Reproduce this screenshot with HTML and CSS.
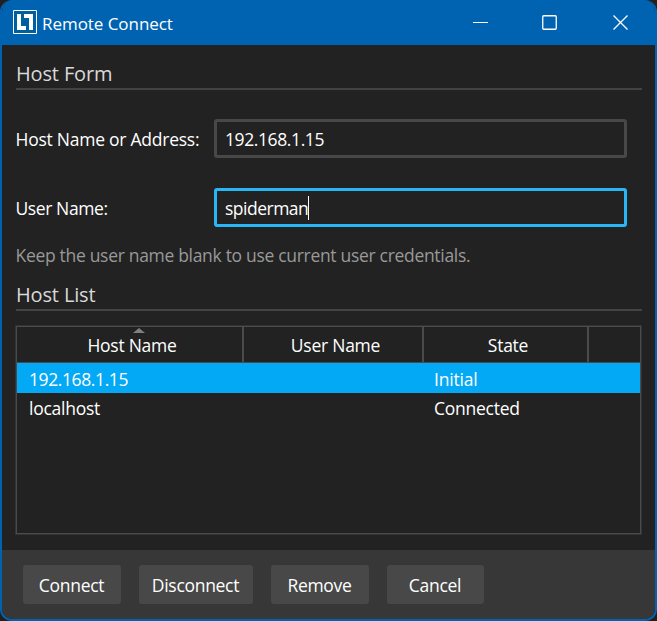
FILE: index.html
```html
<!DOCTYPE html>
<html lang="en">
<head>
<meta charset="utf-8">
<title>Remote Connect</title>
<link rel="stylesheet" href="styles.css">
</head>
<body>
<div class="window">
  <header class="titlebar">
    <svg class="logo" width="24" height="24" viewBox="0 0 24 24"><path fill="#005f9e" stroke="#fff" d="M.5.5h23v23H.5z"/><path fill="#fff" d="M4 4h4v12h5v4H4zM11 4h9v16h-4V8h-5z"/></svg>
    <h1 class="title">Remote Connect</h1>
    <div class="controls">
      <svg width="16" height="16" viewBox="0 0 16 16"><path stroke="#fff" d="M0 7.5h15"/></svg>
      <svg width="16" height="16" viewBox="0 0 16 16"><rect x=".75" y=".75" width="13.5" height="13.5" rx="1" fill="none" stroke="#fff" stroke-width="1.3"/></svg>
      <svg width="16" height="16" viewBox="0 0 16 16"><path stroke="#fff" stroke-width="1.3" d="M.5.5l14 14m0-14l-14 14"/></svg>
    </div>
  </header>
  <main class="content">
    <h2 class="heading">Host Form</h2>
    <div class="field"><label class="wide">Host Name or Address:</label><div class="input">192.168.1.15</div></div>
    <div class="field"><label>User Name:</label><div class="input focused">spiderman<i class="caret"></i></div></div>
    <p class="hint">Keep the user name blank to use current user credentials.</p>
    <h2 class="heading second">Host List</h2>
    <div class="table">
      <div class="row head">
        <div class="cell">Host Name<i class="sort"></i></div><div class="cell">User Name</div><div class="cell">State</div><div class="cell"></div>
      </div>
      <div class="row selected"><div>192.168.1.15</div><div></div><div>Initial</div></div>
      <div class="row"><div>localhost</div><div></div><div>Connected</div></div>
    </div>
  </main>
  <footer class="actions">
    <button class="b1">Connect</button>
    <button class="b2">Disconnect</button>
    <button class="b3">Remove</button>
    <button class="b4">Cancel</button>
  </footer>
</div>
</body>
</html>
```
FILE: styles.css
```css
* { box-sizing: border-box; }
body { margin: 0; background: #202020; font: 17.5px/24px "Open Sans", "Noto Sans", sans-serif; color: #fff; letter-spacing: -.4px; }
h1, h2, p { margin: 0; font-weight: 400; }
.window { width: 657px; height: 621px; display: flex; flex-direction: column; background: #222; border: 2px solid #0063b1; border-top: 0; border-radius: 12px; overflow: hidden; white-space: nowrap; }
.titlebar { height: 45px; display: flex; align-items: center; background: #0063b1; padding: 0 26px 0 11px; flex: none; }
.logo { margin-top: -1px; }
.title { font-size: 17px; line-height: 24px; letter-spacing: -.05px; margin: 2px 0 0 5px; }
.controls { display: flex; margin-left: auto; gap: 55px; }
.controls svg:first-child { margin-right: -2px; }
.content { height: 505px; padding: 15px 14px 0; flex: none; }
.heading { height: 30px; border-bottom: 2px solid #434343; font-size: 20px; line-height: 27px; letter-spacing: -.15px; color: #d9d9d9; margin-right: -1px; }
.field { display: flex; align-items: center; height: 39px; margin-top: 30px; }
.heading + .field { margin-top: 29px; }
.field label { width: 198px; letter-spacing: -.4px; margin-left: -.5px; margin-right: .5px; }
.field label.wide { letter-spacing: -.25px; }
.input { width: 413px; height: 39px; border: 3px solid #484848; border-radius: 3px; padding: 1px 0 0 8px; display: flex; align-items: center; }
.input.focused { border-color: #29b6f6; letter-spacing: -.5px; }
.caret { width: 1px; height: 24px; background: #fff; }
.hint { color: #999; margin: 16px 0 14px -.5px; letter-spacing: -.31px; }
.table { height: 210px; margin: 14px -1px 0 -1px; border: 1px solid #333; box-shadow: inset 0 0 0 1px #4b4b4b; padding: 1px; }
.row { display: grid; grid-template-columns: 227px 180px 165px 1fr; height: 29px; line-height: 30px; letter-spacing: -.25px; }
.row > div { padding-left: 12px; }
.row > div:nth-child(3) { padding-left: 10px; }
.head { height: 36px; line-height: 36px; border-bottom: 1px solid #4b4b4b; }
.head > .cell, .head > .cell:nth-child(3) { padding-left: 5px; border-right: 2px solid #4b4b4b; text-align: center; position: relative; }
.head > .cell:last-child { border: 0; }
.sort { position: absolute; top: 1px; left: 116px; border: solid transparent; border-width: 0 6px 5px; border-bottom-color: #808080; }
.selected { height: 30px; line-height: 32px; letter-spacing: -.4px; background: #03a9f4; }
.selected > div:nth-child(3) { letter-spacing: -.2px; }
.actions { flex: 1; display: flex; background: #373737; padding: 15px 21px; gap: 18px; }
button { height: 39px; border: 0; border-radius: 3px; background: #484848; color: #fff; font: inherit; letter-spacing: -.3px; padding: 0 1px 0 0; }
.b1, .b3 { width: 98px; }
.b2 { width: 114px; }
.b4 { width: 97px; }
```
